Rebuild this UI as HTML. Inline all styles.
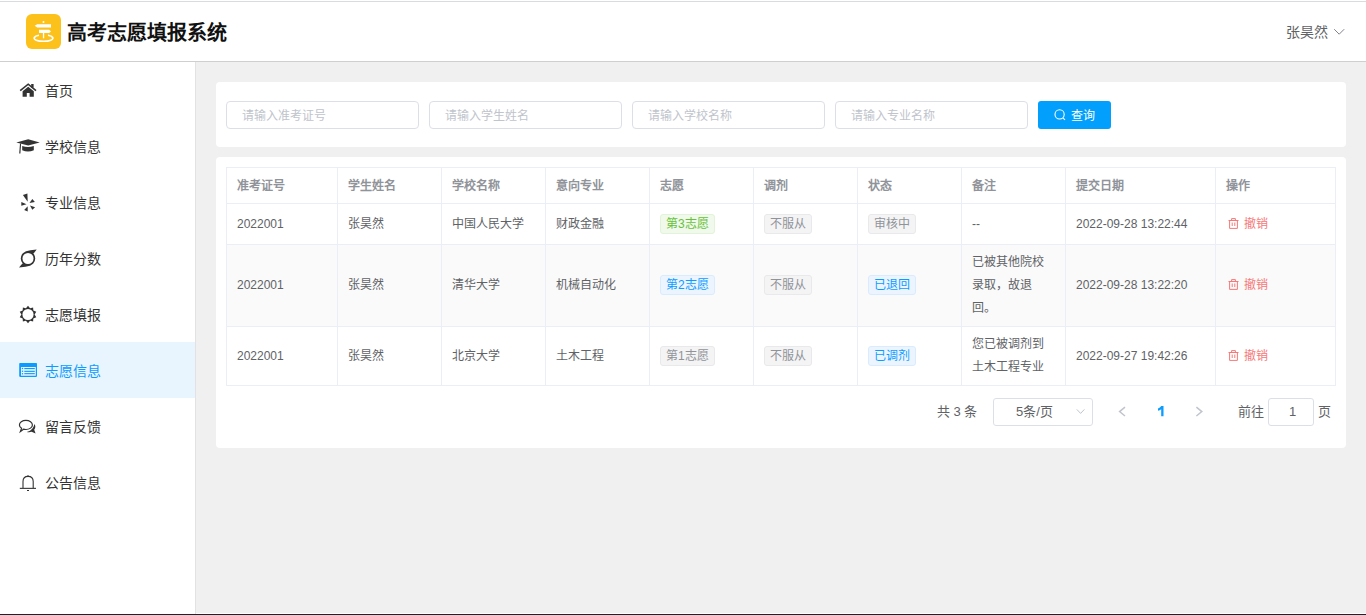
<!DOCTYPE html>
<html lang="zh-CN"><head><meta charset="utf-8">
<style>
*{box-sizing:border-box;margin:0;padding:0}
html,body{width:1366px;height:615px;overflow:hidden;background:#fff;font-family:"Liberation Sans",sans-serif;color:#333}
.topline{position:absolute;left:0;top:1px;width:1366px;height:1px;background:#d9dbdd}
.header{position:absolute;left:0;top:2px;width:1366px;height:59px;background:#fff}
.hline{position:absolute;left:0;top:61px;width:1366px;height:1px;background:#cfcfcf}
.logo{position:absolute;left:26px;top:14px;width:35px;height:35px;background:#fcc21b;border-radius:6px}
.title{position:absolute;left:67px;top:20px;font-size:20px;font-weight:900;color:#111;line-height:26px;white-space:nowrap}
.user{position:absolute;left:1286px;top:23px;font-size:14px;color:#606266;line-height:18px;white-space:nowrap}
.side{position:absolute;left:0;top:62px;width:195px;height:553px;background:#fff}
.sline{position:absolute;left:195px;top:62px;width:1px;height:553px;background:#e2e2e2}
.main{position:absolute;left:196px;top:62px;width:1170px;height:553px;background:#f0f0f0}
.mi{position:absolute;left:0;width:195px;height:56px;font-size:14px;color:#333}
.mi .t{position:absolute;left:45px;top:20px;line-height:18px;white-space:nowrap}
.mi svg{position:absolute;left:18px;top:20px}
.mi.act{background:#e8f4fe;color:#0c9cff}
.card{position:absolute;background:#fff;border-radius:4px}
.inp{position:absolute;top:101px;width:193px;height:28px;border:1px solid #dcdfe6;border-radius:4px;background:#fff}
.inp span{position:absolute;left:15px;top:7px;font-size:12px;line-height:14px;color:#c0c4cc;white-space:nowrap}
.btn{position:absolute;left:1038px;top:101px;width:73px;height:28px;background:#02a0fc;border-radius:3px;color:#fff;font-size:12px}
.btn span{position:absolute;left:33px;top:8px;line-height:14px}
.btn svg{position:absolute;left:16px;top:8px}
table{position:absolute;left:226px;top:167px;border-collapse:collapse;font-size:12px;color:#606266;table-layout:fixed}
td,th{line-height:16px;border:1px solid #ebeef5;text-align:left;padding:0 10px;font-weight:normal;vertical-align:middle}
th{height:36px;font-weight:bold;color:#909399;padding-top:1px;padding-bottom:0}
.tag{display:block;width:max-content;height:20px;line-height:18px;padding:0 5px;border:1px solid;border-radius:3px;font-size:12px}
.tg{background:#f0f9eb;border-color:#e1f3d8;color:#67c23a}
.tb{background:#ecf5ff;border-color:#d9ecff;color:#0c9cff}
.ti{background:#f4f4f5;border-color:#e9e9eb;color:#909399}
.r2 td{padding-bottom:1px}
.del{color:#f67878}
.pg{position:absolute;top:398px;font-size:13px;color:#606266;line-height:28px;white-space:nowrap}
</style></head><body>
<div class="topline"></div>
<div class="header"></div>
<div class="hline"></div>
<div class="logo"></div>
<div class="title">高考志愿填报系统</div>
<div class="user">张昊然</div>

<div class="side">
 <div class="mi" style="top:0"><span class="t">首页</span></div>
 <div class="mi" style="top:56px"><span class="t">学校信息</span></div>
 <div class="mi" style="top:112px"><span class="t">专业信息</span></div>
 <div class="mi" style="top:168px"><span class="t">历年分数</span></div>
 <div class="mi" style="top:224px"><span class="t">志愿填报</span></div>
 <div class="mi act" style="top:280px"><span class="t">志愿信息</span></div>
 <div class="mi" style="top:336px"><span class="t">留言反馈</span></div>
 <div class="mi" style="top:392px"><span class="t">公告信息</span></div>
</div>
<div class="sline"></div>
<div class="main"></div>

<div class="card" style="left:216px;top:82px;width:1130px;height:65px"></div>
<div class="card" style="left:216px;top:157px;width:1130px;height:291px"></div>

<div class="inp" style="left:226px"><span>请输入准考证号</span></div>
<div class="inp" style="left:429px"><span>请输入学生姓名</span></div>
<div class="inp" style="left:632px"><span>请输入学校名称</span></div>
<div class="inp" style="left:835px"><span>请输入专业名称</span></div>
<div class="btn"><span>查询</span></div>

<table>
<colgroup><col style="width:111px"><col style="width:104px"><col style="width:104px"><col style="width:104px"><col style="width:104px"><col style="width:104px"><col style="width:104px"><col style="width:104px"><col style="width:150px"><col style="width:120px"></colgroup>
<tr><th>准考证号</th><th>学生姓名</th><th>学校名称</th><th>意向专业</th><th>志愿</th><th>调剂</th><th>状态</th><th>备注</th><th>提交日期</th><th>操作</th></tr>
<tr style="height:41px"><td>2022001</td><td>张昊然</td><td>中国人民大学</td><td>财政金融</td><td><span class="tag tg">第3志愿</span></td><td><span class="tag ti">不服从</span></td><td><span class="tag ti">审核中</span></td><td>--</td><td>2022-09-28 13:22:44</td><td class="del"><div style="position:relative;height:14px"><svg width="12" height="12" viewBox="0 0 12 12" style="position:absolute;left:2px;top:1px"><g fill="none" stroke="#f67878" stroke-width="1"><path d="M0.5 2.5 H10.5"/><path d="M3.6 2.4 V0.6 H7.4 V2.4"/><path d="M1.6 2.6 V10.4 H9.4 V2.6"/><path d="M4.2 4.5 V8 M6.8 4.5 V8"/></g></svg><span style="position:absolute;left:18px;top:0;line-height:14px;white-space:nowrap">撤销</span></div></td></tr>
<tr class="r2" style="height:82px;background:#fafafa"><td>2022001</td><td>张昊然</td><td>清华大学</td><td>机械自动化</td><td><span class="tag tb">第2志愿</span></td><td><span class="tag ti">不服从</span></td><td><span class="tag tb">已退回</span></td><td style="line-height:23px">已被其他院校录取，故退回。</td><td>2022-09-28 13:22:20</td><td class="del"><div style="position:relative;height:14px"><svg width="12" height="12" viewBox="0 0 12 12" style="position:absolute;left:2px;top:1px"><g fill="none" stroke="#f67878" stroke-width="1"><path d="M0.5 2.5 H10.5"/><path d="M3.6 2.4 V0.6 H7.4 V2.4"/><path d="M1.6 2.6 V10.4 H9.4 V2.6"/><path d="M4.2 4.5 V8 M6.8 4.5 V8"/></g></svg><span style="position:absolute;left:18px;top:0;line-height:14px;white-space:nowrap">撤销</span></div></td></tr>
<tr style="height:59px"><td>2022001</td><td>张昊然</td><td>北京大学</td><td>土木工程</td><td><span class="tag ti">第1志愿</span></td><td><span class="tag ti">不服从</span></td><td><span class="tag tb">已调剂</span></td><td style="line-height:23px">您已被调剂到土木工程专业</td><td>2022-09-27 19:42:26</td><td class="del"><div style="position:relative;height:14px"><svg width="12" height="12" viewBox="0 0 12 12" style="position:absolute;left:2px;top:1px"><g fill="none" stroke="#f67878" stroke-width="1"><path d="M0.5 2.5 H10.5"/><path d="M3.6 2.4 V0.6 H7.4 V2.4"/><path d="M1.6 2.6 V10.4 H9.4 V2.6"/><path d="M4.2 4.5 V8 M6.8 4.5 V8"/></g></svg><span style="position:absolute;left:18px;top:0;line-height:14px;white-space:nowrap">撤销</span></div></td></tr>
</table>


<div class="pg" style="left:937px">共 3 条</div>
<div style="position:absolute;left:993px;top:398px;width:100px;height:28px;border:1px solid #dcdfe6;border-radius:3px;background:#fff"></div>
<div class="pg" style="left:1016px">5条/页</div>

<div class="pg" style="left:1238px">前往</div>
<div style="position:absolute;left:1268px;top:398px;width:46px;height:28px;border:1px solid #dcdfe6;border-radius:3px;background:#fff"></div>
<div class="pg" style="left:1289px">1</div>
<div class="pg" style="left:1318px">页</div>
<div style="position:absolute;left:196px;top:613px;width:1170px;height:1px;background:#fff"></div>
<div style="position:absolute;left:0;top:614px;width:1366px;height:1px;background:#1c232b"></div>

<svg style="position:absolute;left:0;top:0" width="1366" height="615" viewBox="0 0 1366 615">
 <!-- logo -->
 <g transform="translate(26,14)" fill="#fff">
  <circle cx="17.5" cy="7.9" r="1"/>
  <path d="M8.6 11.8 L11.3 10.2 H25 V13.4 H11.3 Z"/>
  <path d="M13 15.7 H23.2 L25 17.4 L23.2 19 H13 Z"/>
  <rect x="16.9" y="19" width="1.3" height="5.3"/>
  <path d="M13 21.3 A9.4 3.2 0 1 0 22 21.3" fill="none" stroke="#fff" stroke-width="1.6"/>
 </g>
 <!-- home -->
 <g fill="#333">
  <path d="M20.2 90.6 L28.2 84.2 L36 90.6" fill="none" stroke="#333" stroke-width="1.6"/>
  <rect x="31.2" y="84" width="2.4" height="3.6"/>
  <path d="M22.6 91.2 L28.2 86.8 L33.8 91.2 V96.8 H29.6 V93 H26.8 V96.8 H22.6 Z"/>
 </g>
 <!-- grad cap -->
 <g fill="#333">
  <path d="M16.3 142.4 L28.2 139.2 L39.7 142.4 L28.2 145.6 Z"/>
  <path d="M22.2 146 Q28 148.2 33.8 146 V150.2 Q28 152.6 22.2 150.2 Z"/>
  <path d="M20 143.6 L21.1 143.6 L20.4 153.6 L19.2 153.6 Z"/>
 </g>
 <!-- yelp -->
 <g fill="#333">
  <path d="M22.9 194.9 L27.4 193.6 L27.7 201.8 Z"/>
  <path d="M21.3 202 L21.3 205.7 L26.5 204.2 Z"/>
  <path d="M27.7 206.3 L27.7 211.6 L24.2 209.9 Z"/>
  <path d="M29.5 203 L32.3 199.1 L34.9 202.1 Z"/>
  <path d="M30 205.4 L35.1 207.2 L32.3 209.8 Z"/>
 </g>
 <!-- history -->
 <g fill="#333">
  <circle cx="28" cy="258.5" r="6.4" fill="none" stroke="#333" stroke-width="1.7"/>
  <path d="M25 251.6 Q30 250 36.7 249.4 L33.6 253.6 Z"/>
  <path d="M31 265.4 Q26 267 19 267.6 L22.4 263.4 Z"/>
 </g>
 <!-- sun/gear -->
 <path fill="#333" fill-rule="evenodd" d="M28.00 305.80 L30.04 308.22 L33.11 307.46 L33.34 310.62 L36.27 311.81 L34.60 314.50 L36.27 317.19 L33.34 318.38 L33.11 321.54 L30.04 320.78 L28.00 323.20 L25.96 320.78 L22.89 321.54 L22.66 318.38 L19.73 317.19 L21.40 314.50 L19.73 311.81 L22.66 310.62 L22.89 307.46 L25.96 308.22 Z M28 308.9 A5.6 5.6 0 1 0 28 320.1 A5.6 5.6 0 1 0 28 308.9 Z"/>
 <!-- list (active) -->
 <g fill="#0c9cff">
  <path fill-rule="evenodd" d="M20 362.9 H36.2 Q37 362.9 37 363.7 V376.1 Q37 376.9 36.2 376.9 H20 Q19.2 376.9 19.2 376.1 V363.7 Q19.2 362.9 20 362.9 Z M21 367 V375.8 H35.8 V367 Z"/>
  <circle cx="22.5" cy="368.6" r="0.75"/><circle cx="22.5" cy="371.3" r="0.75"/><circle cx="22.5" cy="373.7" r="0.75"/>
  <rect x="24.3" y="368" width="10.5" height="1.1"/><rect x="24.3" y="370.8" width="10.5" height="1.1"/><rect x="24.3" y="373.1" width="10.5" height="1.1"/>
 </g>
 <!-- comments -->
 <g fill="#333">
  <path d="M25.9 420.3 C29.6 420.3 32.4 422.4 32.4 424.9 C32.4 427.4 29.6 429.5 25.9 429.5 C25 429.5 24.2 429.4 23.5 429.2 L20.4 431.6 L21.6 428.2 C20.2 427.4 19.4 426.2 19.4 424.9 C19.4 422.4 22.2 420.3 25.9 420.3 Z" fill="none" stroke="#333" stroke-width="1.2"/>
  <path d="M34.4 424 C35.6 425.4 35.8 427.8 34.2 429.8 L35.6 433.6 L31.6 431.8 C30 432.4 28.4 432.4 26.8 432 C30.6 431 33.6 428.6 34.4 424 Z"/>
 </g>
 <!-- bell -->
 <g fill="none" stroke="#333" stroke-width="1.1">
  <path d="M23 488.3 V481.5 Q23 476.4 28 476.4 Q33.2 476.4 33.2 481.5 V488.3"/>
  <path d="M19.8 488.4 H36" stroke="#444" stroke-width="1.2"/>
 </g>
 <rect x="27" y="490" width="2" height="1" fill="#333"/>
 <circle cx="28" cy="476" r="0.8" fill="#333"/>
 <!-- user chevron -->
 <path d="M1334.2 29.2 L1339.2 34.2 L1344.2 29.2" fill="none" stroke="#80838a" stroke-width="1"/>
 <!-- search icon -->
 <g fill="none" stroke="#fff" stroke-width="1.1">
  <circle cx="1059.6" cy="114.4" r="4.6"/>
  <path d="M1062.9 117.8 L1065 119.9"/>
 </g>
 <!-- select chevron -->
 <path d="M1076.8 409.4 L1080.6 413.4 L1084.4 409.4" fill="none" stroke="#c0c4cc" stroke-width="1"/>
 <path fill="#0c9cff" d="M1161.2 406 H1163.5 V416.2 H1161.2 V409.2 Q1159.8 410.2 1158 410.7 V408.6 Q1160.2 407.7 1161.2 406 Z"/>
 <!-- prev/next -->
 <path d="M1125 407.2 L1119.6 411.6 L1125 416" fill="none" stroke="#c0c4cc" stroke-width="1.5"/>
 <path d="M1196.4 407.2 L1201.8 411.6 L1196.4 416" fill="none" stroke="#c0c4cc" stroke-width="1.5"/>
</svg>
</body></html>
